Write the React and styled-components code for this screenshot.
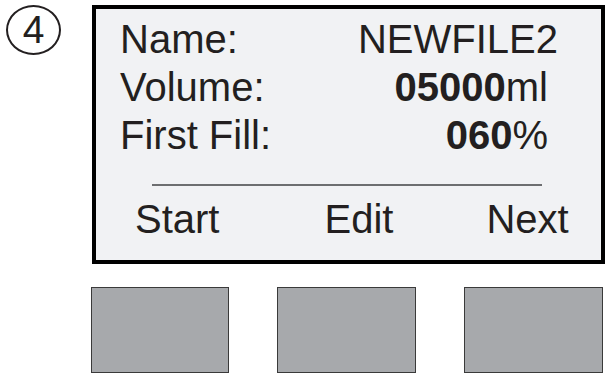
import React from "react";
import styled, { createGlobalStyle } from "styled-components";

const Global = createGlobalStyle`
  html, body { margin: 0; padding: 0; background: #ffffff; }
  body { font-family: "Liberation Sans", Arial, sans-serif; color: #231f20; }
`;

const Page = styled.div`
  width: 609px;
  height: 381px;
  display: flex;
  flex-direction: column;
  padding-top: 5px;
  box-sizing: border-box;
  overflow: hidden;
`;

const TopRow = styled.div`
  display: flex;
  align-items: flex-start;
  padding-left: 7px;
`;

const StepBadge = styled.div`
  width: 55px;
  height: 50px;
  box-sizing: border-box;
  border: 2px solid #231f20;
  border-radius: 50%;
  display: flex;
  align-items: center;
  justify-content: center;
  font-size: 39px;
  line-height: 1;
  padding-bottom: 1px;
  margin-left: -1px;
`;

const Screen = styled.div`
  margin-left: 31px;
  width: 513px;
  height: 259px;
  box-sizing: border-box;
  border: 4px solid #000;
  background: #f1f2f4;
  display: flex;
  flex-direction: column;
  padding-top: 6px;
`;

const InfoRow = styled.div`
  display: flex;
  justify-content: space-between;
  align-items: baseline;
  font-size: 40px;
  line-height: 48px;
  padding-left: 24px;
  padding-right: ${(p) => p.$pr}px;
`;

const Label = styled.span``;

const Value = styled.span``;

const Strong = styled.b`
  font-weight: 700;
`;

const Divider = styled.div`
  height: 2px;
  background: #6d6e70;
  margin: 25px 59px 0 56px;
`;

const KeyRow = styled.div`
  display: flex;
  font-size: 40px;
  line-height: 44px;
  padding-left: 39px;
  margin-top: 11px;
`;

const KeyLabel = styled.span`
  margin-left: ${(p) => p.$ml || 0}px;
`;

const ButtonRow = styled.div`
  display: grid;
  grid-template-columns: 138px 139px 139px;
  column-gap: 48px;
  padding-left: 91px;
  margin-top: 23px;
`;

const SoftButton = styled.div`
  height: 86px;
  box-sizing: border-box;
  border: 1.5px solid #3a3a3a;
  background: #a7a9ac;
`;

export default function App() {
  return (
    <>
      <Global />
      <Page>
        <TopRow>
          <StepBadge>4</StepBadge>
          <Screen>
            <InfoRow $pr={43}>
              <Label>Name:</Label>
              <Value>NEWFILE2</Value>
            </InfoRow>
            <InfoRow $pr={53}>
              <Label>Volume:</Label>
              <Value>
                <Strong>05000</Strong>ml
              </Value>
            </InfoRow>
            <InfoRow $pr={53}>
              <Label>First Fill:</Label>
              <Value>
                <Strong>060</Strong>%
              </Value>
            </InfoRow>
            <Divider />
            <KeyRow>
              <KeyLabel>Start</KeyLabel>
              <KeyLabel $ml={105}>Edit</KeyLabel>
              <KeyLabel $ml={93}>Next</KeyLabel>
            </KeyRow>
          </Screen>
        </TopRow>
        <ButtonRow>
          <SoftButton />
          <SoftButton />
          <SoftButton />
        </ButtonRow>
      </Page>
    </>
  );
}
